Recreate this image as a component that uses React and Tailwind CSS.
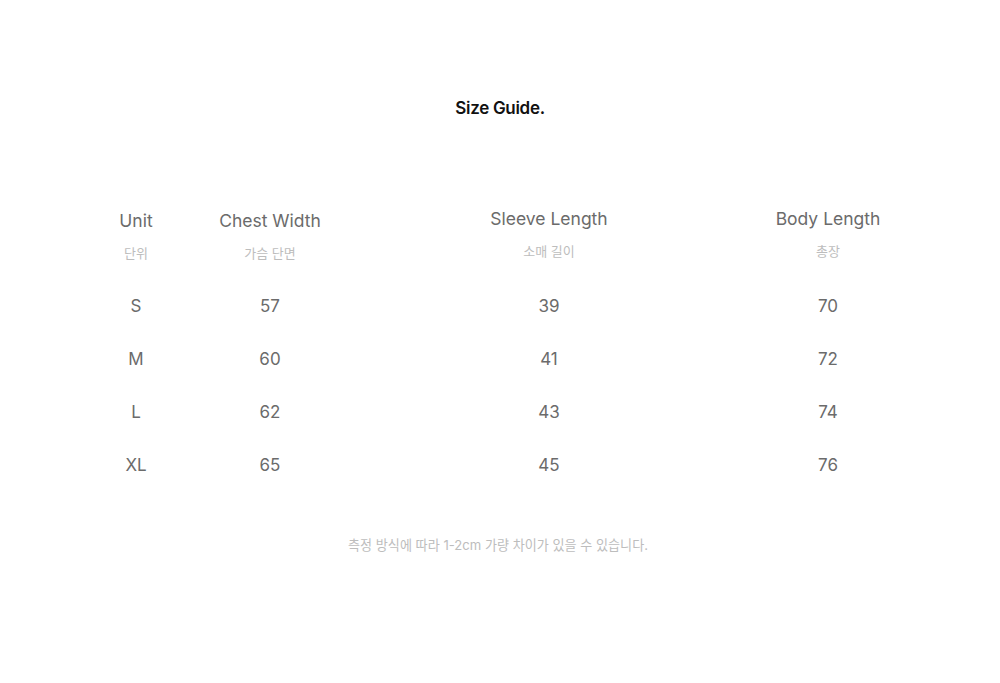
export default function App() {
  const columns = [
    { en: "Unit", ko: "단위", shift: true },
    { en: "Chest Width", ko: "가슴 단면", shift: true },
    { en: "Sleeve Length", ko: "소매 길이" },
    { en: "Body Length", ko: "총장" },
  ]
  const rows = [
    ["S", "57", "39", "70"],
    ["M", "60", "41", "72"],
    ["L", "62", "43", "74"],
    ["XL", "65", "45", "76"],
  ]
  const grid = "grid grid-cols-[112px_156px_402px_156px] ml-[80px]"

  return (
    <div
      className="w-[1000px] h-[683px] bg-white flex flex-col"
      style={{ fontFamily: '"Inter", "Noto Sans CJK KR", sans-serif' }}
    >
      <h1 className="mt-[96px] h-[24px] leading-[24px] text-center text-[17px] font-semibold text-[#111] tracking-[-0.3px]">
        Size Guide.
      </h1>

      <div className={grid + " mt-[87px]"}>
        {columns.map((c) => (
          <div key={c.en} className={"flex flex-col items-center " + (c.shift ? "pt-[2px]" : "")}>
            <div className="h-[24px] leading-[24px] text-[17.5px] text-[#6b6b6b]">{c.en}</div>
            <div className="mt-[11px] h-[18px] leading-[18px] text-[13px] text-[#bdbdbd]">{c.ko}</div>
          </div>
        ))}
      </div>

      <div className="mt-[18px]">
        {rows.map((r) => (
          <div key={r[0]} className={grid + " h-[53px]"}>
            {r.map((v, i) => (
              <div key={i} className="flex items-center justify-center text-[17px] text-[#6b6b6b]">
                {v}
              </div>
            ))}
          </div>
        ))}
      </div>

      <p className="mt-[44px] h-[18px] leading-[18px] text-center text-[13.1px] text-[#bdbdbd] pr-[4px]">
        측정 방식에 따라 1-2cm 가량 차이가 있을 수 있습니다.
      </p>
    </div>
  )
}
